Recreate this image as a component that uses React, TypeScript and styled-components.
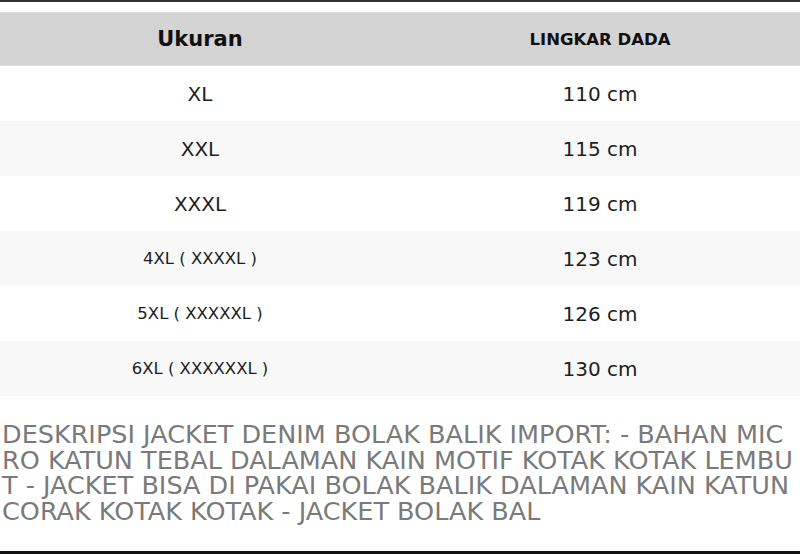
import React from 'react';
import styled, { createGlobalStyle } from 'styled-components';

const GlobalStyle = createGlobalStyle`
  html, body {
    margin: 0;
    padding: 0;
    background: #ffffff;
  }
  body {
    font-family: 'DejaVu Sans', 'Liberation Sans', sans-serif;
  }
`;

interface ISizeRow {
  size: string;
  chest: string;
  small?: boolean;
}

const rows: ISizeRow[] = [
  { size: 'XL', chest: '110 cm' },
  { size: 'XXL', chest: '115 cm' },
  { size: 'XXXL', chest: '119 cm' },
  { size: '4XL ( XXXXL )', chest: '123 cm', small: true },
  { size: '5XL ( XXXXXL )', chest: '126 cm', small: true },
  { size: '6XL ( XXXXXXL )', chest: '130 cm', small: true },
];

const description =
  'DESKRIPSI JACKET DENIM BOLAK BALIK IMPORT: - BAHAN MICRO KATUN TEBAL DALAMAN KAIN MOTIF KOTAK KOTAK LEMBUT - JACKET BISA DI PAKAI BOLAK BALIK DALAMAN KAIN KATUN CORAK KOTAK KOTAK - JACKET BOLAK BAL';

const App: React.FC = () => {
  return (
    <>
      <GlobalStyle />
      <Screen>
        <SizeTable>
          <HeaderRow>
            <HeaderCell>Ukuran</HeaderCell>
            <HeaderCell small>LINGKAR DADA</HeaderCell>
          </HeaderRow>
          {rows.map((row, index) => (
            <BodyRow key={row.size} striped={index % 2 === 1}>
              <Cell small={row.small}>{row.size}</Cell>
              <Cell>{row.chest}</Cell>
            </BodyRow>
          ))}
        </SizeTable>
        <Description>{description}</Description>
      </Screen>
    </>
  );
};

export default App;

const Screen = styled.div`
  width: 800px;
  height: 554px;
  box-sizing: border-box;
  border-top: 2px solid #333333;
  border-bottom: 3px solid #111111;
  padding-top: 10px;
  display: flex;
  flex-direction: column;
  overflow: hidden;
`;

const SizeTable = styled.div`
  display: flex;
  flex-direction: column;
`;

const HeaderRow = styled.div`
  display: grid;
  grid-template-columns: 1fr 1fr;
  height: 54px;
  background: #d4d4d4;
  border-top: 1px solid #dedede;
  border-bottom: 1px solid #dcdcdc;
  box-sizing: border-box;
`;

const HeaderCell = styled.div<{ small?: boolean }>`
  display: flex;
  align-items: center;
  justify-content: center;
  font-weight: 700;
  font-size: ${({ small }) => (small ? '16.5px' : '21px')};
  color: #111111;
`;

const BodyRow = styled.div<{ striped: boolean }>`
  display: grid;
  grid-template-columns: 1fr 1fr;
  height: 55px;
  background: ${({ striped }) => (striped ? '#f8f8f8' : '#ffffff')};
`;

const Cell = styled.div<{ small?: boolean }>`
  display: flex;
  align-items: center;
  justify-content: center;
  font-size: ${({ small }) => (small ? '16.5px' : '20px')};
  color: #1e1e1e;
`;

const Description = styled.div`
  margin-top: 26px;
  padding-left: 2px;
  width: 796px;
  box-sizing: border-box;
  font-size: 25.5px;
  line-height: 25.5px;
  color: #7a7a7a;
  word-break: break-all;
`;
